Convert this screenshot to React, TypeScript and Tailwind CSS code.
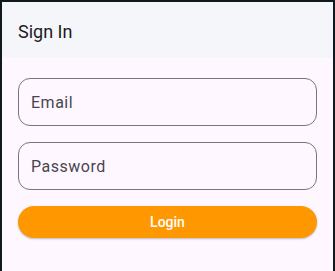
export default function App() {
  return (
    <div className="h-[271px] w-[335px] bg-[#101820] px-[2px] pt-[2px] font-['Roboto',sans-serif]">
      <div className="flex h-full flex-col bg-[#fef7ff]">
        <header className="flex h-[56px] items-center bg-[#f5f6f9] px-4 pt-[2px]">
          <h1 className="text-[18px] text-[#1d1b20]">Sign In</h1>
        </header>
        <form className="flex flex-col gap-4 px-4 pt-5">
          <input
            type="email"
            placeholder="Email"
            className="h-[48px] w-full rounded-xl border border-[#79747e] bg-transparent px-3 text-base tracking-[0.5px] text-[#1d1b20] placeholder-[#49454f] outline-none"
          />
          <input
            type="password"
            placeholder="Password"
            className="h-[48px] w-full rounded-xl border border-[#79747e] bg-transparent px-3 text-base tracking-[0.5px] text-[#1d1b20] placeholder-[#49454f] outline-none"
          />
          <button
            type="button"
            className="h-8 w-full rounded-full bg-[#ff9800] text-sm font-medium text-white shadow-[0_1px_2px_rgba(0,0,0,0.25)]"
          >
            Login
          </button>
        </form>
      </div>
    </div>
  )
}
